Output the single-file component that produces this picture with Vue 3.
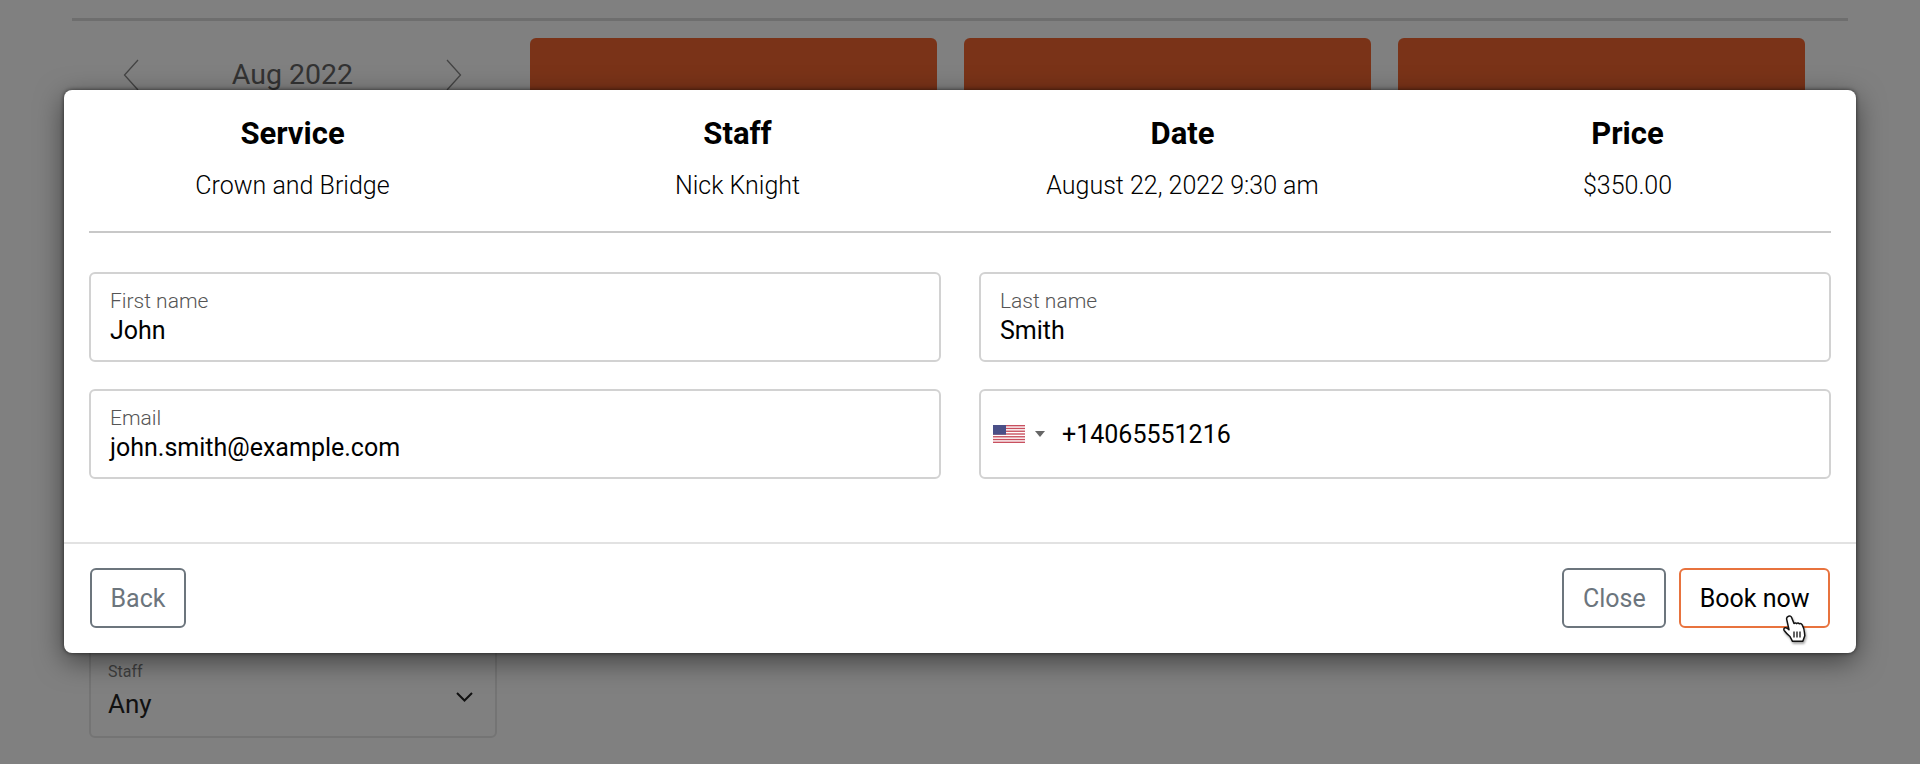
<script setup>
const summary = [
  { title: 'Service', value: 'Crown and Bridge' },
  { title: 'Staff', value: 'Nick Knight' },
  { title: 'Date', value: 'August 22, 2022 9:30 am' },
  { title: 'Price', value: '$350.00' },
]
const stripes = [0, 1, 2, 3, 4, 5, 6]
</script>

<template>
  <div class="page">
    <div class="backdrop">
      <div class="rule"></div>
      <div class="content">
        <div class="side">
          <div class="month">
            <svg class="nav-icon" viewBox="0 0 16 32"><path d="M15 1 1.500 16 15 31" /></svg>
            <span>Aug 2022</span>
            <svg class="nav-icon" viewBox="0 0 16 32"><path d="M1 1l13.500 15L1 31" /></svg>
          </div>
          <div class="staff-select">
            <div>
              <div class="staff-label">Staff</div>
              <div class="staff-value">Any</div>
            </div>
            <svg class="select-icon" viewBox="0 0 17 10"><path d="M1 1l7.500 7.500L16 1" /></svg>
          </div>
        </div>
        <div class="slots">
          <div class="slot" v-for="n in 3" :key="n"></div>
        </div>
      </div>
    </div>

    <section class="modal">
      <div class="modal-body">
        <div class="summary">
          <div class="summary-item" v-for="item in summary" :key="item.title">
            <h2>{{ item.title }}</h2>
            <p>{{ item.value }}</p>
          </div>
        </div>
        <div class="form">
          <div class="field">
            <label>First name</label>
            <div class="value">John</div>
          </div>
          <div class="field">
            <label>Last name</label>
            <div class="value">Smith</div>
          </div>
          <div class="field">
            <label>Email</label>
            <div class="value">john.smith@example.com</div>
          </div>
          <div class="field phone">
            <svg class="flag" viewBox="0 0 32 18">
              <rect width="32" height="18" fill="#fff" />
              <rect v-for="s in stripes" :key="s" x="0" :y="s * 2.77" width="32" height="1.38" fill="#c8505f" />
              <rect width="13" height="9.700" fill="#4a4f87" />
            </svg>
            <span class="caret"></span>
            <span class="value">+14065551216</span>
          </div>
        </div>
      </div>
      <footer class="modal-footer">
        <button class="btn">Back</button>
        <div class="actions">
          <button class="btn">Close</button>
          <button class="btn primary">Book now</button>
        </div>
      </footer>
      <svg class="pointer" viewBox="0 0 24 28">
        <path d="M5.500 1.200c1.300-.6 2.600 0 3.100 1.300L11 8.500c.5-.8 2-.9 2.700.1.600-.7 2-.7 2.600.2.900-.5 2.300 0 2.900 1 1.200 2 2.100 5 2.300 8l.3 3-2 5.500H9.500L7 21.500C5 20 2.700 17.500 1.200 15.500c-.7-1.200-.3-2.500.9-2.800 1.300-.3 2.600.5 3.900 2L3.700 4.300c-.3-1.300.5-2.600 1.800-3.100z" fill="#fff" stroke="#111" stroke-width="1.500" stroke-linejoin="round" />
        <path d="M11 16.500v6M14 16.500v6M17 16.500v6" fill="none" stroke="#111" stroke-width="1.300" />
      </svg>
    </section>
  </div>
</template>

<style>
html, body { margin: 0; background: #808080; }
</style>

<style scoped>
.page {
  position: relative;
  width: 1920px;
  height: 764px;
  overflow: hidden;
  background: #808080;
  font-family: Roboto, "Liberation Sans", sans-serif;
  color: #000;
}
.backdrop {
  padding: 18px 72px 0;
  box-sizing: border-box;
  height: 100%;
}
.rule {
  height: 3px;
  background: #6e6e6e;
  margin-bottom: 17px;
}
.content {
  display: flex;
  gap: 33px;
  padding-left: 17px;
}
.side {
  width: 408px;
  flex: none;
  display: flex;
  flex-direction: column;
}
.month {
  display: flex;
  justify-content: space-between;
  align-items: center;
  padding: 21px 35px 0 34px;
  font-size: 28.500px;
  color: #333;
  line-height: 32px;
}
.nav-icon {
  width: 16px;
  height: 32px;
  fill: none;
  stroke: #444;
  stroke-width: 1.300;
}
.staff-select {
  margin-top: 553px;
  height: 94px;
  box-sizing: border-box;
  border: 2px solid #747474;
  border-radius: 6px;
  padding: 16px 22px 0 17px;
  display: flex;
  justify-content: space-between;
  align-items: flex-start;
}
.staff-label {
  font-size: 16px;
  line-height: 20px;
  color: #3f3f3f;
}
.staff-value {
  font-size: 26px;
  line-height: 34px;
  margin-top: 5px;
  color: #111;
}
.select-icon {
  width: 17px;
  height: 10px;
  margin-top: 30px;
  fill: none;
  stroke: #111;
  stroke-width: 2;
}
.slots {
  display: flex;
  gap: 27px;
}
.slot {
  width: 407px;
  height: 200px;
  background: #7a3318;
  border-radius: 6px;
}
.modal {
  position: absolute;
  left: 64px;
  top: 90px;
  width: 1792px;
  height: 563px;
  background: #fff;
  border-radius: 8px;
  box-shadow: 0 0 4px rgba(0, 0, 0, 0.6), 0 8px 28px rgba(0, 0, 0, 0.5);
  display: flex;
  flex-direction: column;
}
.modal-body {
  flex: 1;
  padding: 0 25px;
}
.summary {
  display: grid;
  grid-template-columns: repeat(4, 1fr);
  column-gap: 38px;
  height: 141px;
  border-bottom: 2px solid #c8c8c8;
  text-align: center;
}
.summary-item h2 {
  margin: 26px 0 0;
  font-size: 31px;
  line-height: 36px;
  font-weight: 700;
}
.summary-item p {
  margin: 17px 0 0;
  font-size: 25px;
  line-height: 34px;
  font-weight: 300;
}
.form {
  display: grid;
  grid-template-columns: 1fr 1fr;
  gap: 27px 38px;
  margin-top: 39px;
}
.field {
  height: 90px;
  box-sizing: border-box;
  border: 2px solid #d2d2d2;
  border-radius: 6px;
  padding: 15px 19px 0;
}
.field label {
  display: block;
  font-size: 21px;
  line-height: 24px;
  font-weight: 300;
  color: #555;
}
.value {
  font-size: 25px;
  line-height: 32px;
  margin-top: 2px;
}
.phone {
  display: flex;
  align-items: center;
  padding: 0 0 0 12px;
}
.flag {
  width: 32px;
  height: 18px;
  flex: none;
}
.caret {
  width: 0;
  height: 0;
  margin: 0 17px 0 10px;
  border-left: 5px solid transparent;
  border-right: 5px solid transparent;
  border-top: 6px solid #666;
}
.modal-footer {
  height: 111px;
  box-sizing: border-box;
  border-top: 2px solid #e2e2e2;
  padding: 24px 26px 0 26px;
  display: flex;
  justify-content: space-between;
  align-items: flex-start;
}
.actions {
  display: flex;
  gap: 13px;
}
.btn {
  height: 60px;
  padding: 0 18.500px;
  background: #fff;
  border: 2px solid #6c757d;
  border-radius: 6px;
  color: #6c757d;
  font: 400 25px Roboto, "Liberation Sans", sans-serif;
}
.primary {
  border-color: #e8733e;
  color: #000;
}
.pointer {
  position: absolute;
  left: 1719px;
  top: 525px;
  width: 24px;
  height: 28px;
  filter: drop-shadow(1px 2px 1px rgba(0, 0, 0, 0.35));
}
</style>
